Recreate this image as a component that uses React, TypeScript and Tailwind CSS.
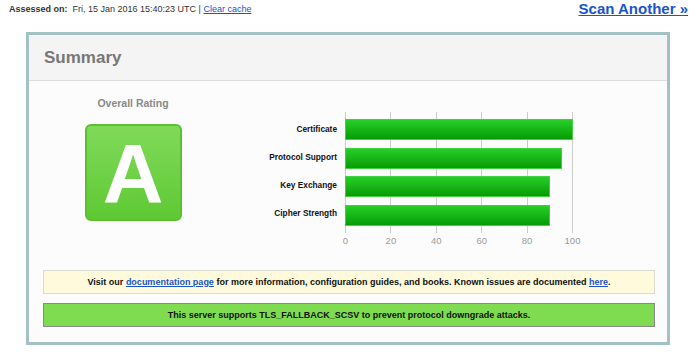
const ratings = [
  { label: "Certificate", score: 100 },
  { label: "Protocol Support", score: 95 },
  { label: "Key Exchange", score: 90 },
  { label: "Cipher Strength", score: 90 },
];

const ticks = [0, 20, 40, 60, 80, 100];

function RatingChart() {
  return (
    <div className="flex pt-[31px]">
      <div className="flex w-[108px] flex-col gap-[7.7px] pr-[8px] pt-[7px]">
        {ratings.map((r) => (
          <div key={r.label} className="flex h-[21px] items-center justify-end pt-px text-[8.3px] font-bold text-[#111]">
            {r.label}
          </div>
        ))}
      </div>
      <div className="relative w-[228px]">
        {ticks.map((t) => (
          <div
            key={t}
            className="absolute top-0 h-[121px] w-px bg-[#cccccc]"
            style={{ left: `${(t / 100) * 227}px` }}
          />
        ))}
        {ticks.map((t) => (
          <div
            key={`l${t}`}
            className="absolute top-[122px] w-[30px] -translate-x-1/2 text-center text-[9.5px] text-[#9a9a9a]"
            style={{ left: `${(t / 100) * 227 + 0.5}px` }}
          >
            {t}
          </div>
        ))}
        <div className="relative flex flex-col gap-[7.7px] pt-[7px]">
          {ratings.map((r) => (
            <div
              key={r.label}
              className="h-[21px] border border-[#3fd13f] bg-gradient-to-b from-[#26cf26] to-[#049c04]"
              style={{ width: `${(r.score / 100) * 227 + 1}px` }}
            />
          ))}
        </div>
      </div>
    </div>
  );
}

export default function App() {
  return (
    <div className="h-[355px] w-[690px] bg-white font-['Liberation_Sans',Arial,sans-serif]">
      <div className="flex h-[32px] items-start justify-between pl-[9px] pr-[2px]">
        <div className="pt-[3px] text-[9px] text-[#333]">
          <span className="font-bold">Assessed on:</span>
          <span>&nbsp; Fri, 15 Jan 2016 15:40:23 UTC | </span>
          <a href="#" className="text-[#1a55cc] underline">Clear cache</a>
        </div>
        <a href="#" className="text-[15px] font-bold leading-[18px] text-[#1a55cc] underline">
          Scan Another »
        </a>
      </div>

      <div className="ml-[26px] h-[313px] w-[644px] border-[3px] border-[#a3c2c6] bg-[#fcfcfc]">
        <div className="flex h-[46px] items-center border-b border-[#dddddd] bg-[#f4f4f4] pl-[15px] text-[17px] font-bold text-[#777777]">
          Summary
        </div>

        <div className="flex h-[142px]">
          <div className="flex w-[208px] flex-col items-center pt-[15px]">
            <div className="text-[10.5px] font-bold leading-[14px] text-[#8a8a8a]">Overall Rating</div>
            <div className="mt-[14px] flex h-[97px] w-[97px] items-center justify-center rounded-[6px] border-2 border-[#5cbf31] bg-gradient-to-b from-[#80da58] to-[#5ec933] pt-[2px] text-[84px] font-bold leading-none text-white">
              A
            </div>
          </div>
          <RatingChart />
        </div>

        <div className="ml-[14px] mt-[47px] flex w-[612px] flex-col gap-[9px]">
          <div className="flex h-[24px] items-center justify-center border border-[#dcdcd0] bg-[#fffadb] pt-px text-[9px] font-bold text-[#111]">
            <span>
              Visit our{" "}
              <a href="#" className="text-[#1a55cc] underline">documentation page</a> for more
              information, configuration guides, and books. Known issues are documented{" "}
              <a href="#" className="text-[#1a55cc] underline">here</a>.
            </span>
          </div>
          <div className="flex h-[24px] items-center justify-center border border-[#8a8a8a] bg-[#7fdb4f] pt-px text-[9px] font-bold text-[#111]">
            This server supports TLS_FALLBACK_SCSV to prevent protocol downgrade attacks.
          </div>
        </div>
      </div>
    </div>
  );
}
